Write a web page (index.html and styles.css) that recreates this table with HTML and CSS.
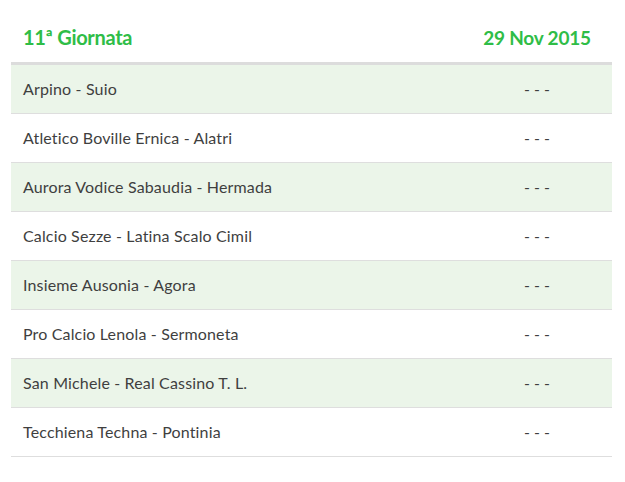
FILE: index.html
```html
<!DOCTYPE html>
<html lang="it">
<head>
<meta charset="utf-8">
<link rel="stylesheet" href="styles.css">
</head>
<body>
<div class="wrap">
<table class="fixtures">
  <thead>
    <tr>
      <th class="round">11ª Giornata</th>
      <th class="date">29 Nov 2015</th>
    </tr>
  </thead>
  <tbody>
    <tr class="alt"><td class="match">Arpino - Suio</td><td class="score">- - -</td></tr>
    <tr><td class="match">Atletico Boville Ernica - Alatri</td><td class="score">- - -</td></tr>
    <tr class="alt"><td class="match">Aurora Vodice Sabaudia - Hermada</td><td class="score">- - -</td></tr>
    <tr><td class="match">Calcio Sezze - Latina Scalo Cimil</td><td class="score">- - -</td></tr>
    <tr class="alt"><td class="match">Insieme Ausonia - Agora</td><td class="score">- - -</td></tr>
    <tr><td class="match">Pro Calcio Lenola - Sermoneta</td><td class="score">- - -</td></tr>
    <tr class="alt"><td class="match">San Michele - Real Cassino T. L.</td><td class="score">- - -</td></tr>
    <tr><td class="match">Tecchiena Techna - Pontinia</td><td class="score">- - -</td></tr>
  </tbody>
</table>
</div>
</body>
</html>
```
FILE: styles.css
```css
html, body {
  margin: 0;
  padding: 0;
  background: #fff;
}
.wrap {
  padding-left: 11px;
  width: 601px;
}
.fixtures {
  width: 100%;
  border-collapse: collapse;
  font-family: Lato, "Open Sans", sans-serif;
}
.fixtures th {
  box-sizing: border-box;
  height: 63px;
  padding: 26px 12px 0;
  font-size: 19px;
  line-height: 23px;
  font-weight: 700;
  color: #2fbd47;
  border-bottom: 3px solid #dcdcdc;
  vertical-align: top;
}
.fixtures .round {
  text-align: left;
  font-size: 20px;
  letter-spacing: -0.3px;
}
.fixtures .date {
  text-align: center;
  width: 150px;
  padding-left: 0;
  padding-right: 0;
  letter-spacing: -0.2px;
}
.fixtures td {
  height: 48px;
  padding: 0 12px;
  font-size: 16px;
  color: #3f3f3f;
  border-bottom: 1px solid #dedede;
  vertical-align: middle;
}
.fixtures .match {
  letter-spacing: 0.15px;
}
.fixtures tr.alt td {
  background: #ebf5e9;
}
.fixtures .score {
  text-align: center;
  width: 150px;
  padding: 0;
}
```
